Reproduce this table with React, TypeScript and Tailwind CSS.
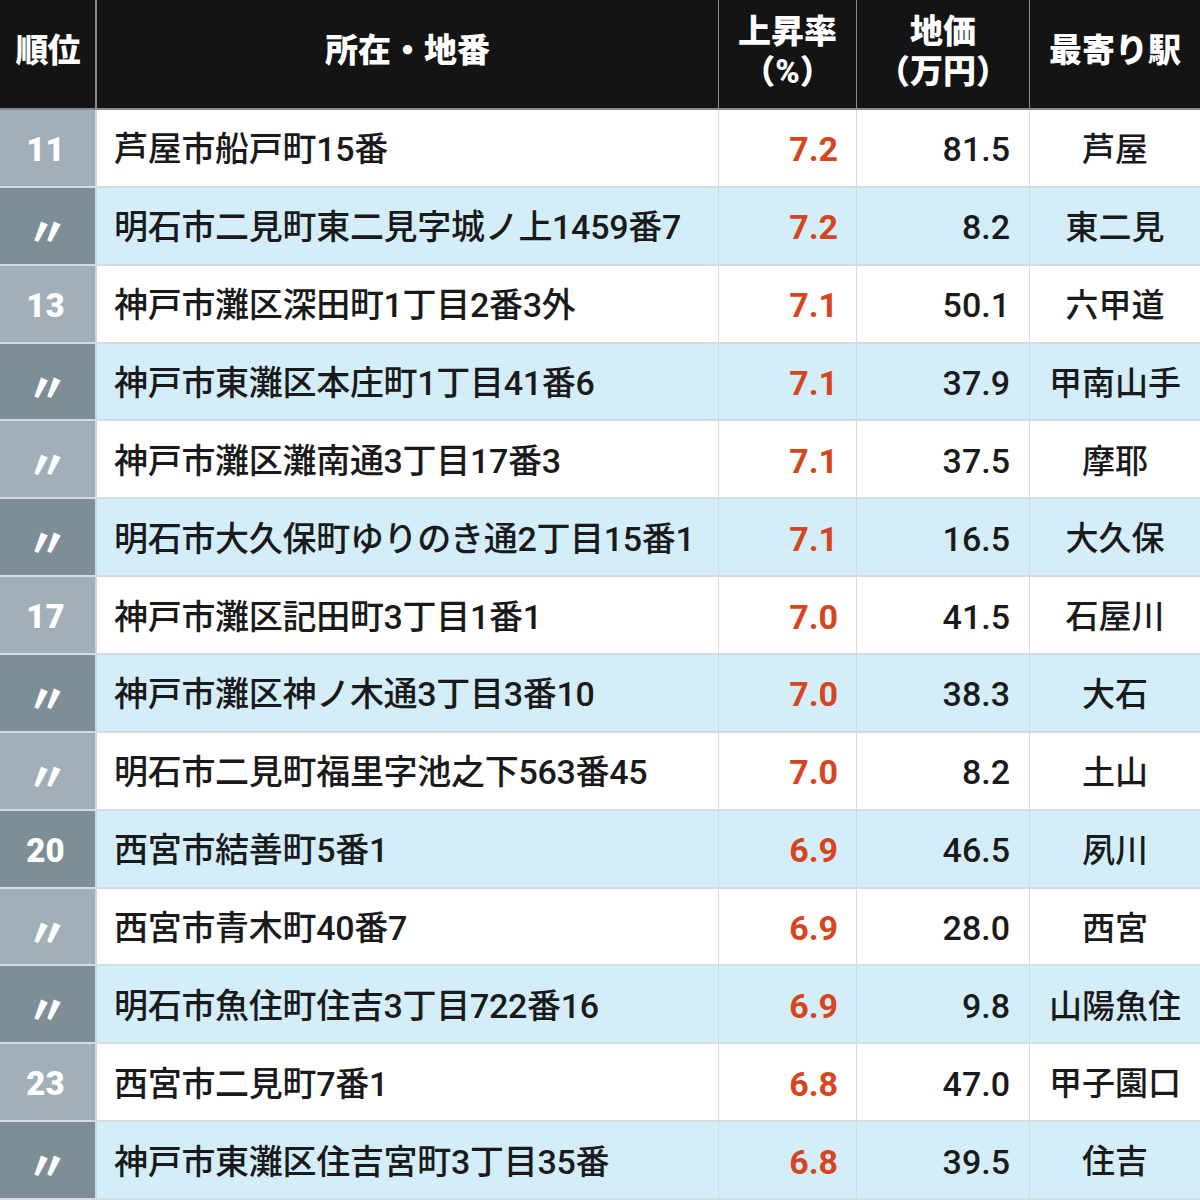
import React from "react";

type Row = { rank: string; addr: string; rate: string; price: string; station: string };

const rows: Row[] = [
  { rank: "11", addr: "芦屋市船戸町15番", rate: "7.2", price: "81.5", station: "芦屋" },
  { rank: "〃", addr: "明石市二見町東二見字城ノ上1459番7", rate: "7.2", price: "8.2", station: "東二見" },
  { rank: "13", addr: "神戸市灘区深田町1丁目2番3外", rate: "7.1", price: "50.1", station: "六甲道" },
  { rank: "〃", addr: "神戸市東灘区本庄町1丁目41番6", rate: "7.1", price: "37.9", station: "甲南山手" },
  { rank: "〃", addr: "神戸市灘区灘南通3丁目17番3", rate: "7.1", price: "37.5", station: "摩耶" },
  { rank: "〃", addr: "明石市大久保町ゆりのき通2丁目15番1", rate: "7.1", price: "16.5", station: "大久保" },
  { rank: "17", addr: "神戸市灘区記田町3丁目1番1", rate: "7.0", price: "41.5", station: "石屋川" },
  { rank: "〃", addr: "神戸市灘区神ノ木通3丁目3番10", rate: "7.0", price: "38.3", station: "大石" },
  { rank: "〃", addr: "明石市二見町福里字池之下563番45", rate: "7.0", price: "8.2", station: "土山" },
  { rank: "20", addr: "西宮市結善町5番1", rate: "6.9", price: "46.5", station: "夙川" },
  { rank: "〃", addr: "西宮市青木町40番7", rate: "6.9", price: "28.0", station: "西宮" },
  { rank: "〃", addr: "明石市魚住町住吉3丁目722番16", rate: "6.9", price: "9.8", station: "山陽魚住" },
  { rank: "23", addr: "西宮市二見町7番1", rate: "6.8", price: "47.0", station: "甲子園口" },
  { rank: "〃", addr: "神戸市東灘区住吉宮町3丁目35番", rate: "6.8", price: "39.5", station: "住吉" },
];

const font = { fontFamily: "Roboto, 'Noto Sans CJK JP', sans-serif" };

export default function App() {
  return (
    <div className="w-[1200px] h-[1200px] flex flex-col bg-white overflow-hidden text-[#1a1a1a]" style={font}>
      <div className="h-[110px] flex bg-[#141414] text-white font-black text-[33px] leading-[40px] border-b-2 border-[#8a8a8a]">
        <div className="w-[97px] flex items-center justify-center border-r-2 border-[#8a8a8a] pb-[6px] tracking-[-1px]">順位</div>
        <div className="w-[622px] flex items-center justify-center border-r border-[#8a8a8a] pb-[6px]">所在・地番</div>
        <div className="w-[138px] flex flex-col items-center justify-center border-r border-[#8a8a8a] pb-[4px]">
          <span>上昇率</span>
          <span>（%）</span>
        </div>
        <div className="w-[173px] flex flex-col items-center justify-center border-r border-[#8a8a8a] pb-[4px]">
          <span>地価</span>
          <span>（万円）</span>
        </div>
        <div className="flex-1 flex items-center justify-center pb-[6px] whitespace-nowrap">最寄り駅</div>
      </div>
      {rows.map((r, i) => {
        const blue = i % 2 === 1;
        const ditto = r.rank === "〃";
        return (
          <div
            key={i}
            className={`flex-1 flex border-b-2 border-[#d5dbe0] ${blue ? "bg-[#d3edf9]" : "bg-white"}`}
          >
            <div
              className={`w-[97px] flex items-center justify-center text-white font-black border-r-2 border-[#cfd6db] ${
                blue ? "bg-[#7d8e97]" : "bg-[#a1afb8]"
              } ${ditto ? "text-[40px] pt-[14px]" : "text-[33px] pt-[4px] pr-[4px]"}`}
            >
              {r.rank}
            </div>
            <div className="w-[622px] flex items-center pl-[17px] pt-[4px] text-[34px] font-medium border-r border-[#d6dadd] whitespace-nowrap tracking-[-0.3px]">
              {r.addr}
            </div>
            <div className="w-[138px] flex items-center justify-end pr-[18px] pt-[4px] text-[34px] font-bold text-[#d6451d] border-r border-[#d6dadd]">
              {r.rate}
            </div>
            <div className="w-[173px] flex items-center justify-end pr-[19px] pt-[4px] text-[34px] font-medium border-r border-[#d6dadd]">
              {r.price}
            </div>
            <div className="flex-1 flex items-center justify-center pt-[4px] text-[33px] font-medium whitespace-nowrap">
              {r.station}
            </div>
          </div>
        );
      })}
    </div>
  );
}
